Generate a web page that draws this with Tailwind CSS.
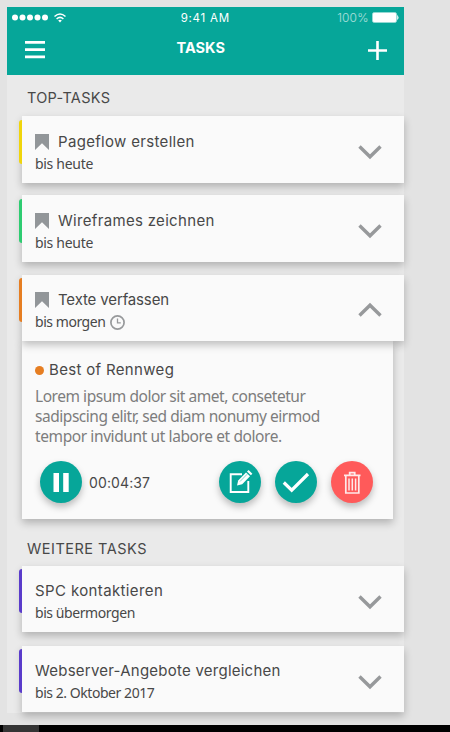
<!DOCTYPE html>
<html lang="de">
<head>
<meta charset="utf-8">
<title>Tasks</title>
<script src="https://cdn.jsdelivr.net/npm/@tailwindcss/browser@4"></script>
</head>
<body class="w-[450px] h-[732px] overflow-hidden bg-[#e3e3e3] font-['Inter',sans-serif] text-[#484848] flex flex-col">
<svg class="hidden">
  <symbol id="mark" viewBox="0 0 14 16"><path d="M0 0H14V16L7 9.2L0 16Z" fill="#929699"/></symbol>
  <symbol id="down" viewBox="0 0 24 15"><path d="M1.5 1.5L12 11.8L22.5 1.5" fill="none" stroke="#97999b" stroke-width="3.4"/></symbol>
</svg>
<div class="h-[725px] shrink-0 pt-[7px] pl-[7px]">
  <main class="w-[396.5px] h-[706px] bg-[#eaeaea]">
    <header class="h-[68px] bg-[#06a699] text-white">
      <div class="h-[21px] flex items-center justify-between pl-[5px] pr-[5px]">
        <div class="w-[120px] flex items-center">
          <svg class="w-9 h-[7px]" viewBox="0 0 36 7" fill="#fff"><circle cx="3" cy="3.5" r="3"/><circle cx="10.5" cy="3.5" r="3"/><circle cx="18" cy="3.5" r="3"/><circle cx="25.5" cy="3.5" r="3"/><circle cx="33" cy="3.5" r="3"/></svg>
          <svg class="ml-[6px] w-3 h-[10px]" viewBox="0 0 12 10" fill="none" stroke="#fff" stroke-width="1.5"><path d="M.5 3.5Q6-1.6 11.5 3.5M2.6 6Q6 2.8 9.4 6"/><path d="M4.2 7.6Q6 6 7.8 7.6L6 9.5Z" fill="#fff" stroke="none"/></svg>
        </div>
        <span class="text-[11.5px] leading-[16px] tracking-[0.75px] pt-px -ml-px">9:41 AM</span>
        <div class="w-[120px] flex items-center justify-end gap-[4px] -mr-px">
          <span class="text-[12px] leading-[16px] pt-px text-white/65 font-light tracking-[0.1px]">100%</span>
          <svg class="w-[27px] h-[11px]" viewBox="0 0 27 11"><rect x=".4" y=".4" width="24.2" height="10.2" rx="2" fill="#fff" stroke="#9bdbd6" stroke-width=".8"/><path d="M25.5 3.5Q27 5.5 25.5 7.5Z" fill="#fff" stroke="#fff" stroke-width=".5"/></svg>
        </div>
      </div>
      <div class="h-[44px] flex items-center justify-between pl-[18px] pr-[17px]">
        <svg class="w-5 h-[18px]" viewBox="0 0 20 18" fill="#fff"><path d="M0 0H20V2.7H0ZM0 7.3H20V10H0ZM0 14.5H20V17.2H0Z"/></svg>
        <h1 class="text-[14.5px] leading-[20px] font-bold -mt-[4px] mr-[11px] tracking-[0px]">TASKS</h1>
        <svg class="w-[19px] h-[19px]" viewBox="0 0 19 19" fill="#fff"><path d="M8.2 0H10.8V19H8.2ZM0 8.2H19V10.8H0Z"/></svg>
      </div>
    </header>

    <h2 class="h-[41.3px] pt-[13px] pl-[20px] text-[14.5px] leading-[20px] tracking-[0.3px]">TOP-TASKS</h2>

    <div class="flex flex-col gap-[12.7px]">
      <article class="flex">
        <div class="w-[15px] pt-[3.5px] flex justify-end relative z-20"><i class="w-[3px] h-[44px] rounded-l-[3px] bg-[#f0d50c]"></i></div>
        <section class="flex-1 h-[66.5px] bg-[#fafafa] shadow-[0_4px_8px_rgba(0,0,0,0.24)] flex items-center justify-between pl-[13px] pr-[22px]">
          <div class="pt-[6px]">
            <h3 class="flex items-center gap-[9px] text-[15px] leading-[22px] h-[22px]"><svg class="w-[14px] h-4 mt-[1px]"><use href="#mark"/></svg><span class="tracking-[0.32px]">Pageflow erstellen</span></h3>
            <p class="font-['Noto_Sans',sans-serif] text-[14px] leading-[22px] tracking-[-0.3px]">bis heute</p>
          </div>
          <svg class="w-6 h-[15px] mt-[6px]"><use href="#down"/></svg>
        </section>
      </article>

      <article class="flex">
        <div class="w-[15px] pt-[3.5px] flex justify-end relative z-20"><i class="w-[3px] h-[44px] rounded-l-[3px] bg-[#2ecc71]"></i></div>
        <section class="flex-1 h-[66.5px] bg-[#fafafa] shadow-[0_4px_8px_rgba(0,0,0,0.24)] flex items-center justify-between pl-[13px] pr-[22px]">
          <div class="pt-[6px]">
            <h3 class="flex items-center gap-[9px] text-[15px] leading-[22px] h-[22px]"><svg class="w-[14px] h-4 mt-[1px]"><use href="#mark"/></svg><span class="tracking-[0.32px]">Wireframes zeichnen</span></h3>
            <p class="font-['Noto_Sans',sans-serif] text-[14px] leading-[22px] tracking-[-0.3px]">bis heute</p>
          </div>
          <svg class="w-6 h-[15px] mt-[6px]"><use href="#down"/></svg>
        </section>
      </article>

      <article>
        <div class="flex relative z-10">
          <div class="w-[15px] pt-[3.5px] flex justify-end relative z-20"><i class="w-[3px] h-[44px] rounded-l-[3px] bg-[#e67e22]"></i></div>
          <section class="flex-1 h-[66.5px] bg-[#fafafa] shadow-[0_4px_8px_rgba(0,0,0,0.24)] flex items-center justify-between pl-[13px] pr-[22px]">
            <div class="pt-[6px]">
              <h3 class="flex items-center gap-[9px] text-[15px] leading-[22px] h-[22px]"><svg class="w-[14px] h-4 mt-[1px]"><use href="#mark"/></svg><span class="tracking-[-0.14px]">Texte verfassen</span></h3>
              <p class="flex items-center gap-[5px] font-['Noto_Sans',sans-serif] text-[14px] leading-[22px] tracking-[-0.45px]">bis morgen <svg class="w-[15px] h-[15px] mt-px" viewBox="0 0 15 15" fill="none" stroke="#97999b"><circle cx="7.5" cy="7.5" r="6.6" stroke-width="1.7"/><path d="M7.5 3.5V7.8H10.8" stroke-width="1.3"/></svg></p>
            </div>
            <svg class="w-6 h-[15px] mt-[4px] rotate-180"><use href="#down"/></svg>
          </section>
        </div>
        <section class="ml-[15px] w-[371px] h-[177.5px] bg-[#fafafa] shadow-[0_4px_8px_rgba(0,0,0,0.24)] pl-[13px] pt-[18px]">
          <h4 class="flex items-center gap-[5px] text-[15px] leading-[22px]"><i class="w-[9px] h-[9px] rounded-full bg-[#e67e22]"></i><span class="tracking-[0.33px]">Best of Rennweg</span></h4>
          <p class="mt-[6px] font-['Noto_Sans',sans-serif] text-[15.5px] leading-[19.8px] text-[#7d7d7d] whitespace-nowrap tracking-[-0.46px]"><span class="block">Lorem ipsum dolor sit amet, consetetur</span><span class="block">sadipscing elitr, sed diam nonumy eirmod</span><span class="block tracking-[-0.4px]">tempor invidunt ut labore et dolore.</span></p>
          <div class="mt-[14px] pl-[5px] pr-[20px] flex items-center">
            <button class="w-[42px] h-[42px] rounded-full bg-[#06a699] shadow-[0_4px_7px_rgba(0,0,0,0.25)]"><svg class="w-[42px] h-[42px]" viewBox="0 0 42 42"><path d="M13.5 12H19V31H13.5ZM23.2 12H28.7V31H23.2Z" fill="#fff"/></svg></button>
            <span class="ml-[7px] w-[130px] text-[14px] leading-[20px] pt-[2px] tracking-[0.12px]">00:04:37</span>
            <div class="flex gap-[14px]">
              <button class="w-[42px] h-[42px] rounded-full bg-[#06a699] shadow-[0_4px_7px_rgba(0,0,0,0.25)]"><svg class="w-[42px] h-[42px]" viewBox="0 0 42 42"><path d="M23 13.3H11.7V31H29.3V20" fill="none" stroke="#fff" stroke-width="1.9"/><path d="M18 24.5L19.2 19.4L27 11.5L31 15.3L23.2 23.2Z" fill="#fff"/><path d="M28 10.5L29.6 9L33.4 12.7L31.9 14.3Z" fill="#fff"/><path d="M21 20.5L28.2 13.2" stroke="#06a699" stroke-width=".5"/></svg></button>
              <button class="w-[42px] h-[42px] rounded-full bg-[#06a699] shadow-[0_4px_7px_rgba(0,0,0,0.25)]"><svg class="w-[42px] h-[42px]" viewBox="0 0 42 42"><path d="M8.8 21.5L16.7 29.2L33 13" fill="none" stroke="#fff" stroke-width="3.2"/></svg></button>
              <button class="w-[42px] h-[42px] rounded-full bg-[#ff5a5a] shadow-[0_4px_7px_rgba(0,0,0,0.25)]"><svg class="w-[42px] h-[42px]" viewBox="0 0 42 42" fill="none" stroke="#ffe9e9"><path d="M13 14.3H29.5M18.7 14V11.6H23.7V14" stroke-width="1.8"/><path d="M14.8 15V32H27.8V15" stroke-width="1.7"/><path d="M18 17.5V29.5M21.3 17.5V29.5M24.6 17.5V29.5" stroke-width="1.5"/></svg></button>
            </div>
          </div>
        </section>
      </article>
    </div>

    <h2 class="h-[47.3px] pt-[20px] pl-[20px] text-[14.5px] leading-[20px] tracking-[0.5px]">WEITERE TASKS</h2>

    <div class="flex flex-col gap-[13.5px]">
      <article class="flex">
        <div class="w-[15px] pt-[3.5px] flex justify-end relative z-20"><i class="w-[3px] h-[44px] rounded-l-[3px] bg-[#5a3ccb]"></i></div>
        <section class="flex-1 h-[66.5px] bg-[#fafafa] shadow-[0_4px_8px_rgba(0,0,0,0.24)] flex items-center justify-between pl-[13px] pr-[22px]">
          <div class="pt-[5px]">
            <h3 class="text-[15px] leading-[22px]"><span class="tracking-[0.38px]">SPC kontaktieren</span></h3>
            <p class="font-['Noto_Sans',sans-serif] text-[14px] leading-[22px] tracking-[-0.43px]">bis übermorgen</p>
          </div>
          <svg class="w-6 h-[15px] mt-[6px]"><use href="#down"/></svg>
        </section>
      </article>

      <article class="flex">
        <div class="w-[15px] pt-[3.5px] flex justify-end relative z-20"><i class="w-[3px] h-[44px] rounded-l-[3px] bg-[#5a3ccb]"></i></div>
        <section class="flex-1 h-[66.5px] bg-[#fafafa] shadow-[0_4px_8px_rgba(0,0,0,0.24)] flex items-center justify-between pl-[13px] pr-[22px]">
          <div class="pt-[6px]">
            <h3 class="text-[15px] leading-[22px]"><span class="tracking-[0.24px]">Webserver-Angebote vergleichen</span></h3>
            <p class="font-['Noto_Sans',sans-serif] text-[14px] leading-[22px] tracking-[-0.45px]">bis 2. Oktober 2017</p>
          </div>
          <svg class="w-6 h-[15px] mt-[6px]"><use href="#down"/></svg>
        </section>
      </article>
    </div>
  </main>
</div>
<footer class="h-[7px] bg-black pl-[3px] shrink-0"><div class="w-9 h-full bg-[#343434]"></div></footer>
</body>
</html>
